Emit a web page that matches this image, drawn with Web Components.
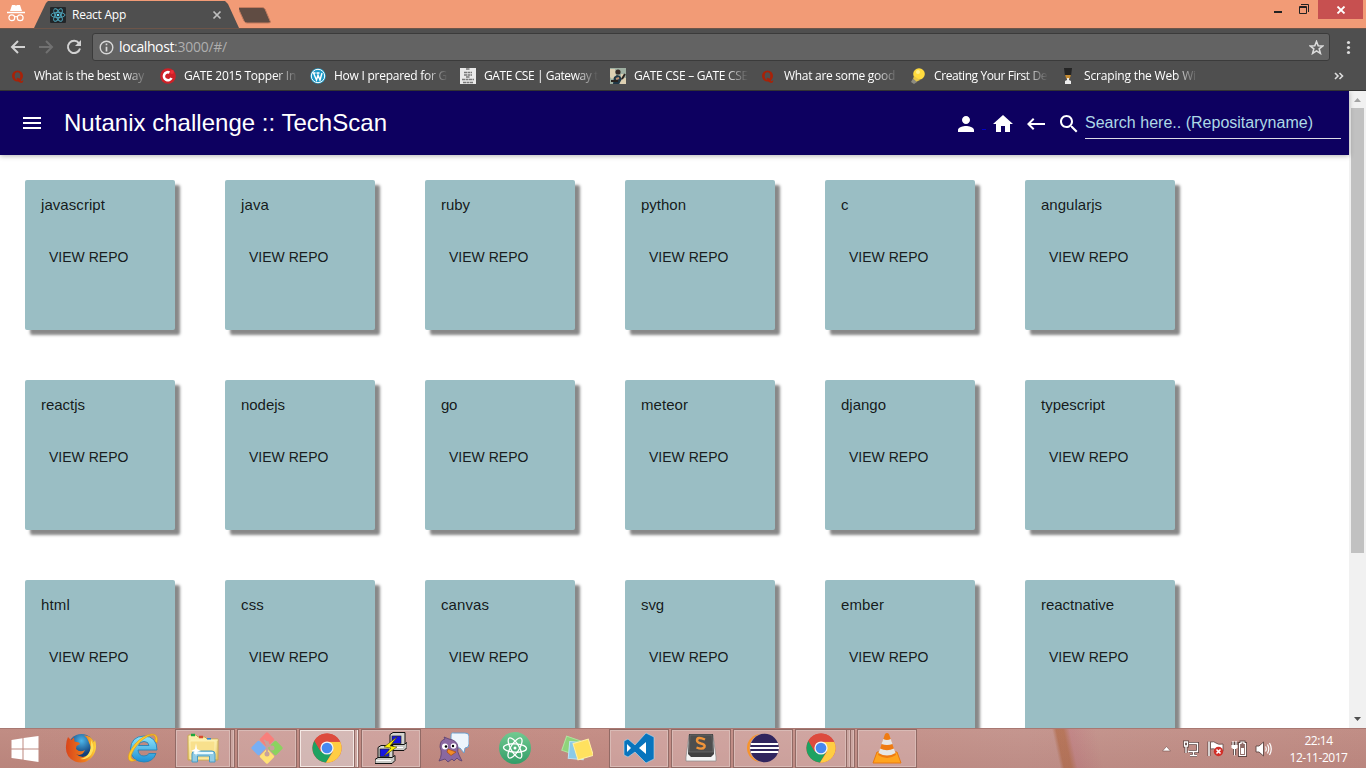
<!DOCTYPE html>
<html lang="en"><head><meta charset="utf-8"><title>React App</title>
<style>
html,body{margin:0;height:100%;overflow:hidden}
body{font-family:"Open Sans","Noto Sans",sans-serif}
</style></head><body>
<desktop-screen></desktop-screen>
<script>
const define=(name,css,html,after)=>customElements.define(name,class extends HTMLElement{
  connectedCallback(){
    if(this.shadowRoot)return;
    const r=this.attachShadow({mode:'open'});
    r.innerHTML='<style>*{box-sizing:border-box}svg{display:block;flex:none}'+css+'</style>'+(typeof html==='function'?html(this):html);
    if(after)after(this,r);
  }
});
const svg=(w,h,body,vb)=>`<svg width="${w}" height="${h}" viewBox="${vb||`0 0 ${w} ${h}`}">${body}</svg>`;

/* Single line of text tracked out or in to a given width */
define('fit-text',':host{display:block;white-space:pre}span{display:inline-block}','<span><slot></slot></span>',(el,r)=>{
  const w=+el.getAttribute('w'),s=r.querySelector('span'),n=el.textContent.length;
  s.style.letterSpacing=((w-s.getBoundingClientRect().width)/n)+'px';
});

const chrome=`<circle cx="16" cy="16" r="14.6" fill="#dd4b3e"/>
<path d="M3.4 8.7A14.6 14.6 0 0 0 15 30.6L21.5 19.5 16 16 9.8 19.6Z" fill="#1da261"/>
<path d="M15 30.6A14.6 14.6 0 0 0 29.2 9.7H16L22 19.5Z" fill="#ffcd43"/>
<path d="M3.4 8.7A14.6 14.6 0 0 1 29.2 9.7H16L9.8 19.6Z" fill="#dd4b3e"/>
<circle cx="16" cy="16" r="6.6" fill="#f4f4f4"/><circle cx="16" cy="16" r="5.3" fill="#4688f1"/>`;
const pc=(x,y)=>`<g transform="translate(${x} ${y})"><path d="M3 1 6-1H18V10L15 13H3Z" fill="#d4d4d0" stroke="#111"/><rect x="5" y="2.5" width="9" height="7.5" fill="#1515e0" stroke="#222" stroke-width=".7"/><path d="M0 13 3 11H17L20 9V14L17 17H0Z" fill="#c9c9c5" stroke="#111"/><path d="M1 14H16" stroke="#fff"/></g>`;
const apps={
firefox:`<defs><radialGradient id="b" cx=".5" cy=".25"><stop offset="0" stop-color="#4cb6ea"/><stop offset="1" stop-color="#123f79"/></radialGradient><linearGradient id="o" x2="1"><stop stop-color="#d9451b"/><stop offset=".65" stop-color="#ee7d1d"/><stop offset="1" stop-color="#ffd83a"/></linearGradient></defs>
<circle cx="16.5" cy="15.5" r="13.5" fill="url(#b)"/>
<path d="M3 5 6 8 9 5.5 9.5 9.5 14 10.5 15 12 11.5 14 11 17Q15 21 20 18 17 25 11 22 18 28 24 22 27 18 25 13L23 8Q22 5 19 3.5 26 3 29 10L30 8Q33 18 27 25 20 33 10 29.5 0 25 1 14 1 9 3 5Z" fill="url(#o)"/>
<path d="M26 8Q31 16 26 23 22 28 15 27 27 25 26 8Z" fill="#ffe15a"/>`,
ie:`<defs><linearGradient id="e" y2="1" x2="0"><stop stop-color="#8fe6fb"/><stop offset="1" stop-color="#1d8fd4"/></linearGradient></defs>
<path d="M30 18H11Q11.5 24 17 24 20.500 24 22 21.500H29Q26 30 17 30 4 29.500 3.500 17 4 4.500 17 4 30 4.500 30 18ZM11.500 13.500H22Q21.500 9.500 17 9.500 12.500 9.500 11.500 13.500Z" fill="url(#e)" fill-rule="evenodd" stroke="#2584b8" stroke-width=".9"/>
<path d="M30 11Q32 2 25 2 16 3 8 12 0 22 1.500 27 3 31 9 28 4 28 4 24 6 17 13 10 21 3 26 3 29.500 4 28 9Z" fill="#ffc928" stroke="#df9b13" stroke-width=".6"/>`,
folder:`<defs><linearGradient id="f" y2="1" x2="0"><stop stop-color="#fff4b4"/><stop offset="1" stop-color="#e5c566"/></linearGradient></defs>
<path d="M1 6V4Q1 3 2 3H9L11 5H18L20 7H31V28H1Z" fill="url(#f)" stroke="#c9a94e"/>
<path d="M4 3H8" stroke="#19a83d" stroke-width="2.500"/><path d="M12 5H16" stroke="#d94a2f" stroke-width="2.500"/><path d="M20 7H24" stroke="#2d86d5" stroke-width="2"/>
<path d="M4 8H31M3 9H28V27H3Z" fill="#f8e08c" stroke="#fff5bd" stroke-width=".8"/>
<path d="M5 30V22Q5 19 8 19H25Q28 19 28 22V30H22.500V24H10.500V30Z" fill="#91cce5" stroke="#4a9cc2"/><path d="M7 21H26" stroke="#e7faff" stroke-width="2"/><path d="M9 11 10 17 14 19 10 20 9 24 8 20 4 19 8 17Z" fill="#fff"/>`,
git:`<g transform="rotate(45 16 16)"><rect x="4.500" y="4.500" width="11" height="11" rx="1.500" fill="#f87f7b"/><rect x="16.500" y="4.500" width="11" height="11" rx="1.500" fill="#8bd35f"/><rect x="4.500" y="16.500" width="11" height="11" rx="1.500" fill="#77aff4"/><rect x="16.500" y="16.500" width="11" height="11" rx="1.500" fill="#ffe276"/></g><path d="M13 8 20.500 15.500M16 10V22" stroke="#c7a29c" stroke-width="1.800"/><circle cx="16" cy="11" r="2" fill="#c7a29c"/><circle cx="21" cy="16" r="2.500" fill="#c7a29c"/><circle cx="16" cy="22" r="2.500" fill="#c7a29c"/>`,
chrome,
putty:pc(12,1.5)+pc(0,14.5)+`<path d="M22 5 9 15 16 16 9 24 22 15 15 14Z" fill="#fff200" stroke="#4c4600" stroke-width=".6"/>`,
pidgin:`<path d="M17 1Q14 0 14 4V13Q14 16 18 16H23L27 21 28 16Q32 16 32 12V4Q32 1 28 1Z" fill="#edf5fc" stroke="#6b9fcd"/><path d="M2 29Q6 22 3 15 3 8 8 7L7 5 12 7Q20 8 21 15 20 20 22 23L25 29Q21 28 20 26L17 29 15 27 11 30 8 27Z" fill="#8a68a0" stroke="#59406f" stroke-width=".8"/><circle cx="8" cy="14.500" r="3" fill="#fff"/><circle cx="16.500" cy="14" r="2.800" fill="#fff"/><circle cx="9" cy="14.500" r="1.300"/><circle cx="16" cy="14" r="1.200"/><path d="M11 17 19 20 14 23.500 10 20Z" fill="#f28c26" stroke="#a84b13" stroke-width=".7"/>`,
atom:`<defs><linearGradient id="a" x2="0" y2="1"><stop stop-color="#72ca91"/><stop offset="1" stop-color="#329d68"/></linearGradient></defs><circle cx="16" cy="16" r="16" fill="url(#a)"/><g fill="none" stroke="#fff" stroke-width="1.300"><ellipse cx="16" cy="16" rx="4.200" ry="11.500" transform="rotate(-30 16 16)"/><ellipse cx="16" cy="16" rx="4.200" ry="11.500" transform="rotate(32 16 16)"/><ellipse cx="16" cy="16" rx="4.200" ry="11.500" transform="rotate(93 16 16)"/></g><circle cx="16" cy="16" r="1.500" fill="#fff"/>`,
notes:`<rect x="3" y="6" width="15" height="15" transform="rotate(19 10 13)" fill="#8ed47b" stroke="#b2e3a0"/><rect x="8" y="10" width="15" height="17" transform="rotate(5 15 18)" fill="#8acae8" stroke="#bde5f5"/><rect x="14" y="9" width="16" height="17" transform="rotate(-17 22 17)" fill="#ffe15f" stroke="#fff0a5"/>`,
code:`<path d="M1 9 5 7 12 13 23 1 31 5V27L23 31 12 20 5 25 1 23Z" fill="#0874bd" stroke="#bcdced" stroke-width=".6"/><path d="M4 12V20L8 16ZM23 10 16 16 23 22Z" fill="#fff"/>`,
sublime:`<path d="M4 3H28L31 25V29H1V25Z" fill="#f5f5f5" stroke="#888" stroke-width=".7"/><path d="M4 2H28L29 22 26 25H6L3 22Z" fill="#414141"/><path d="M5 3H27L28 20H4Z" fill="#4e4e4e" stroke="#7e7e7e" stroke-width=".5"/><path d="M20 7.500Q12 4 12 8.500 12 10.500 16 11.500 20.500 12.500 19.500 15 17.500 18 11.500 15.500" fill="none" stroke="#f0943a" stroke-width="2.400"/>`,
eclipse:`<circle cx="14" cy="16" r="14" fill="#f8942a"/><circle cx="17" cy="16" r="14.600" fill="#c7a09e"/><circle cx="17.500" cy="16" r="14.300" fill="#30255e"/><path d="M3.800 12H31.200M3 16H32M3.800 20H31.200" stroke="#fff" stroke-width="1.800"/>`,
vlc:`<path d="M6 20H26L30 31H2Z" fill="#ffa41f" stroke="#e97910"/><path d="M14 2Q16 0 18 2L25 23Q16 29 7 23Z" fill="#ef7b12"/><path d="M12.200 7 10.500 12Q16 14 21.500 12L19.800 7Q16 9 12.200 7ZM9 16.500 7.500 21Q16 26 24.500 21L23 16.500Q16 20 9 16.500Z" fill="#e6e6e6"/>`
};
define('app-icon',':host{display:block}',el=>svg(32,32,apps[el.getAttribute('name')]));

define('window-strip',`
:host{display:flex;height:28px;background:#f29b76;align-items:flex-start;color:#fff}
.in{padding:5px 0 0 7px;width:34px}
.tab{width:205px;height:28px;display:flex;align-items:center;padding:2px 0 0 16px;background:#4f4f4f;clip-path:polygon(0 100%,12px 3px,14px 1px,191px 1px,194px 4px,205px 100%)}
.title{margin-left:6px;width:140px;font-size:12px;line-height:26px}
.new{width:35px;padding-top:7px}
.win{margin-left:auto;display:flex}
.c{width:45px;height:19px;background:#c75050;margin-right:3px;display:flex;align-items:center;justify-content:center}`,
`<div class="in">${svg(18,17,'<path d="M5 0H8L9 .7 10 0H13L15 6H3Z" fill="#fff"/><path d="M0 7.500H18" stroke="#fff" stroke-width="1.500"/><g fill="none" stroke="#fff" stroke-width="1.200"><circle cx="4.800" cy="12.700" r="2.900"/><circle cx="13.200" cy="12.700" r="2.900"/><path d="M7.500 12Q9 11 10.500 12"/></g>')}</div>
<div class="tab">${svg(16,16,'<rect width="16" height="16" rx="1" fill="#222629"/><g fill="none" stroke="#50aac1" stroke-width=".9"><ellipse cx="8" cy="8" rx="7" ry="2.600"/><ellipse cx="8" cy="8" rx="7" ry="2.600" transform="rotate(60 8 8)"/><ellipse cx="8" cy="8" rx="7" ry="2.600" transform="rotate(120 8 8)"/></g><circle cx="8" cy="8" r="1.300" fill="#61dafb"/>')}
<div class="title"><fit-text w="54">React App</fit-text></div>${svg(10,10,'<path d="M1.500 1.500 8.500 8.500M8.500 1.500 1.500 8.500" stroke="#bfbfbf" stroke-width="1.700"/>')}</div>
<div class="new">${svg(35,17,'<path d="M0 .5H23Q25 .500 26 2L31.500 15Q31.500 16 29 16H8Q6 16 5 14L-.5 2Q-1 .500 0 .500Z" fill="#604c43" stroke="#c27b5e"/>')}</div>
<div class="win">${svg(44,19,'<rect x="0" y="11" width="8" height="2" fill="#222"/><path d="M25.500 6.500H32.500V13.500H25.500ZM25 7.500H33M27 4.500H34.500V12" fill="none" stroke="#222"/>')}<div class="c">${svg(10,8,'<path d="M1.500 .500 8.500 7.500M8.500 .500 1.500 7.500" stroke="#fff" stroke-width="1.800"/>')}</div></div>`);

define('address-row',`
:host{display:flex;height:34px;border-top:1px solid #6d5549;background:#4f4f4f;align-items:center;padding:3px 0 0 10px}
.nav{display:flex;gap:12px;width:82px}
.bar{width:1238px;height:28px;border:1px solid #3b3b3b;border-radius:3px;background:#636363;display:flex;align-items:center;padding:0 5px 0 6px;font-size:14px;color:#fff}
.bar fit-text{line-height:26px}.h{margin-left:5px}.p{color:#aeaeae;margin-right:auto}.m{margin-left:16px}`,
`<div class="nav">${svg(16,16,'<path d="M15 8H2M8 2 2 8 8 14" fill="none" stroke="#d2d2d2" stroke-width="2"/>')}${svg(16,16,'<path d="M1 8H14M8 2 14 8 8 14" fill="none" stroke="#717171" stroke-width="2"/>')}${svg(16,16,'<path d="M13 4.300A6.100 6.100 0 1 0 14 9.500" fill="none" stroke="#d2d2d2" stroke-width="2"/><path d="M15 1V7H9Z" fill="#d2d2d2"/>')}</div>
<div class="bar">${svg(15,15,'<circle cx="7.500" cy="7.500" r="6.300" fill="none" stroke="#d8d8d8" stroke-width="1.400"/><path d="M7.500 6.700V11.500M7.500 3.500V5.200" stroke="#d8d8d8" stroke-width="1.700"/>')}<fit-text class="h" w="55">localhost</fit-text><fit-text class="p" w="53">:3000/#/</fit-text>${svg(15,15,'<path d="M7.500 1.500 9.200 5.700 13.700 6 10.200 8.900 11.400 13.400 7.500 10.900 3.600 13.400 4.800 8.900 1.300 6 5.800 5.700Z" fill="none" stroke="#dcdcdc" stroke-width="1.600"/>')}</div>
<div class="m">${svg(5,15,'<g fill="#dcdcdc"><circle cx="2.500" cy="2.500" r="1.600"/><circle cx="2.500" cy="7.500" r="1.600"/><circle cx="2.500" cy="12.500" r="1.600"/></g>')}</div>`);

const marks={
q:'<path d="M7.500 2.500A5.500 5.500 0 1 0 7.500 13.500 5.500 5.500 0 1 0 7.500 2.500M7.500 4.200Q10.300 4.200 10.300 8T7.500 11.800 4.700 8 7.500 4.200" fill="#a82208" fill-rule="evenodd"/><path d="M6.500 10Q9 9 11 13 12 13.500 12.500 12.500H13.500Q13 15 11 15 8 14 7 11Z" fill="#a82208"/>',
gate:'<circle cx="8" cy="8" r="7.800" fill="#ce2027"/><path d="M9.500 4.500A4 4 0 1 0 11.500 10" fill="none" stroke="#fff" stroke-width="2.600"/><circle cx="12" cy="4" r="1.900" fill="#ed3038"/>',
wp:'<circle cx="8" cy="8" r="7.800" fill="#1c9ac8"/><circle cx="8" cy="8" r="6.700" fill="none" stroke="#fff"/><path d="M3.500 5 6.500 12 8 7 10 12 12 5M2.500 5H5.500M6.500 5H9.500" fill="none" stroke="#fff" stroke-width="1.400"/>',
note:'<rect width="16" height="16" fill="#e9e9e9"/><path d="M6 1H10M4 4.500H12M4 7H12M6 9H10M2 11.500H14M3 14.500H13" stroke="#777" stroke-width="1.300" stroke-dasharray="3 .5"/>',
photo:'<rect width="16" height="16" fill="#9eafa1"/><path d="M0 1H5L6 8 2 11 0 9ZM11 6H14V10H16V16H10Z" fill="#ddd0b2"/><circle cx="8" cy="4" r="2.600" fill="#352b27"/><path d="M4 9 7 7 10 8 12 11 9 16H3Z" fill="#203746"/><path d="M12 11 15 6M1 13H8" stroke="#28221f" stroke-width="2"/><path d="M6 11 9 10" stroke="#bd8d6c" stroke-width="2"/>',
bulb:'<circle cx="9" cy="6" r="5.800" fill="#ffdb3e"/><path d="M4 8 10 12 6 14 3 11Z" fill="#e6c746"/><path d="M3 10.500 7 14 4 16 1 14Z" fill="#8e8c80"/><circle cx="8" cy="4" r="2" fill="#fff08c"/>',
glass:'<path d="M4 0H12L11 8H5Z" fill="#242424"/><path d="M5 7H11L9.500 11H6.500Z" fill="#c48b33"/><path d="M7 10H9V12L11 13V16H5V13L7 12Z" fill="#eee"/>'};
define('book-mark',`:host{display:flex;width:150px;align-items:center;gap:8px;font-size:12px;line-height:18px;color:#fff}
.t{width:116px;overflow:hidden;-webkit-mask:linear-gradient(90deg,#000 91px,transparent 114px)}`,
el=>svg(16,16,marks[el.getAttribute('icon')])+`<div class="t"><fit-text w="${el.getAttribute('w')}">${el.textContent}</fit-text></div>`);
define('bookmark-row',`:host{display:flex;height:29px;background:#4f4f4f;border-bottom:1px solid #333;padding:0 0 1px 10px;align-items:center}.more{margin-left:124px}`,
[['q',110,'What is the best way'],['gate',112,'GATE 2015 Topper In'],['wp',113,'How I prepared for G'],['note',114,'GATE CSE | Gateway t'],['photo',114,'GATE CSE – GATE CSE'],['q',111,'What are some good'],['bulb',113,'Creating Your First De'],['glass',112,'Scraping the Web Wi']].map(([i,w,t])=>`<book-mark icon="${i}" w="${w}">${t}</book-mark>`).join('')+`<div class="more">${svg(10,8,'<path d="M1 1 4 4 1 7M5.500 1 8.500 4 5.500 7" fill="none" stroke="#ddd" stroke-width="1.600"/>')}</div>`);

const mi=d=>svg(24,24,`<path d="${d}" fill="#fff"/>`);
define('app-bar',`
:host{display:flex;position:relative;z-index:1;height:64px;background:#0d0060;box-shadow:0 1px 5px rgba(0,0,0,.3);align-items:center;padding:0 8px 0 20px;color:#fff;font-family:"Liberation Sans",sans-serif}
.title{margin-left:20px;font-size:24px;line-height:32px}
.acts{margin-left:auto;display:flex;align-items:center;padding-top:2px}
i{width:4px;height:1px;background:#0000c8;margin:11px 5px 0 4px}
.b{margin-left:9px}.s{margin-left:9px}
.input{width:256px;height:33px;border-bottom:1px solid #dcdce6;margin-left:4px;margin-top:-3px;font-size:16px;line-height:34px;color:#add8e6}`,
`${mi('M3 18h18v-2H3v2zm0-5h18v-2H3v2zm0-7v2h18V6H3z')}<div class="title"><fit-text w="323">Nutanix challenge :: TechScan</fit-text></div>
<div class="acts">${mi('M12 12c2.200 0 4-1.800 4-4s-1.800-4-4-4-4 1.800-4 4 1.800 4 4 4zm0 2c-2.700 0-8 1.300-8 4v2h16v-2c0-2.700-5.300-4-8-4z')}<i></i>${mi('M10 20v-6h4v6h5v-8h3L12 3 2 12h3v8z')}<div class="b">${mi('M21 11H6.830l3.580-3.590L9 6l-6 6 6 6 1.410-1.410L6.830 13H21z')}</div><div class="s">${mi('M15.500 14h-.79l-.28-.27C15.410 12.590 16 11.110 16 9.500 16 5.910 13.090 3 9.500 3S3 5.910 3 9.500 5.910 16 9.500 16c1.610 0 3.090-.59 4.230-1.570l.27.28v.79l5 4.990L20.490 19l-4.990-5zm-6 0C7.010 14 5 11.990 5 9.500S7.010 5 9.500 5 14 7.010 14 9.500 11.990 14 9.500 14z')}</div>
<div class="input"><fit-text w="228">Search here.. (Repositaryname)</fit-text></div></div>`);

define('repo-card',`
:host{display:block;width:150px;height:150px;background:#9abec4;border-radius:2px;box-shadow:5px 5px 3px #888;padding:16px;font-family:"Liberation Sans",sans-serif;color:rgba(0,0,0,.87)}
.n{font-size:15px;line-height:18px}.v{font-size:14px;line-height:36px;margin:25px 0 0 8px;white-space:nowrap}`,
'<div class="n"><slot></slot></div><div class="v"><fit-text w="79.500">VIEW REPO</fit-text></div>');
const names={javascript:64,java:28,ruby:29,python:45,c:7,angularjs:61,reactjs:44,nodejs:44,go:16,meteor:47,django:45,typescript:64,html:29,css:23,canvas:48,svg:23,ember:43,reactnative:73};
define('repo-grid',':host{display:grid;grid-template-columns:repeat(6,150px);gap:50px;padding:25px;align-content:start}',
Object.entries(names).map(([n,w])=>`<repo-card><fit-text w="${w}">${n}</fit-text></repo-card>`).join(''));
define('scroll-bar',`:host{display:flex;flex-direction:column;width:17px;background:#f1f1f1;align-items:center;justify-content:space-between}.t{width:13px;height:445px;background:#c1c1c1;margin-bottom:auto}`,
`${svg(17,17,'<path d="M5 11H12L8.500 7Z" fill="#a3a3a3"/>')}<div class="t"></div>${svg(17,17,'<path d="M5 6H12L8.500 10Z" fill="#505050"/>')}`);
define('page-view',':host{display:flex;height:637px;background:#fff;overflow:hidden}.m{flex:1;min-width:0}','<div class="m"><app-bar></app-bar><repo-grid></repo-grid></div><scroll-bar></scroll-bar>');

define('task-slot',`
:host{display:flex;width:62px;height:40px;padding:0 1px 1px;justify-content:center;align-items:center;flex:none}
.b{flex:1;height:39px;display:flex;justify-content:center;align-items:center;border:1px solid #916a65}
.open .b{background:rgba(225,195,195,.4);box-shadow:inset 0 0 0 1px #d9bab5}
.on .b{background:rgba(225,215,215,.6);box-shadow:inset 0 0 0 1px #f4e8e4}
.w{display:flex;width:60px}.idle .b{border-color:transparent}
.e{width:4px;height:39px;border:1px solid #916a65;border-left:0;background:#cba6a1;box-shadow:inset -1px 0 #d9bab5}.on .e{box-shadow:inset -1px 0 #f4e8e4}`,
el=>`<div class="w ${el.getAttribute('state')||'idle'}"><div class="b"><app-icon name="${el.getAttribute('app')}"></app-icon></div>${'<div class="e"></div>'.repeat(+el.getAttribute('stack')||0)}</div>`);
define('task-bar',`
:host{display:flex;height:40px;background:linear-gradient(transparent,rgba(130,70,65,.12)),linear-gradient(78deg,transparent 0 1037px,rgba(172,94,50,.55) 1041px 1048px,rgba(190,110,125,.35) 1054px,transparent 1080px),linear-gradient(90deg,#c18d84,#c58f87 45%,#c5968f 75%,#c18e86);border-top:1px solid #a87872;align-items:center;color:#fff}
.st{width:50px;padding-left:11px}.tray{margin-left:auto;display:flex;align-items:center}
.g{margin-left:12px}.h{margin-left:6px}.k{margin-left:8px}
.clock{font-size:12px;line-height:17px;width:94px;display:flex;flex-direction:column;align-items:center;padding:1px 1px 0 0}`,
`<div class="st">${svg(28,28,'<path d="M.5 5 11.500 3.300V13.500H.5ZM12.500 3.100 27.500 1V13.500H12.500ZM.5 14.500H11.500V24.600L.5 23ZM12.500 14.500H27.500V27L12.500 24.800Z" fill="#fff"/>')}</div>`+
[['firefox'],['ie'],['folder','open',1],['git','open'],['chrome','on',1],['putty','open'],['pidgin'],['atom'],['notes'],['code','open'],['sublime','open'],['eclipse','open'],['chrome','open',2],['vlc','open']].map(([a,s,k])=>`<task-slot app="${a}" state="${s||'idle'}" stack="${k||0}"></task-slot>`).join('')+
`<div class="tray">${svg(9,6,'<path d="M.500 5 4.500 .500 8.500 5Z" fill="#fff" stroke="#75504c" stroke-width=".6"/>')}
<div class="g">${svg(18,18,'<g fill="none" stroke="#5e4542" stroke-width="3"><path d="M6 3.500H14.500V11.500H6M10.500 11.500V15M7 15.500H14M3 6V13M1.500 2H4.500V6H1.500Z"/></g><g fill="none" stroke="#fff" stroke-width="1.300"><path d="M6 3.500H14.500V11.500H5M10.500 11.500V15M7 15.500H14M3 6V13M1.500 2H4.500V6H1.500Z"/></g>')}</div>
<div class="h">${svg(18,18,'<path d="M2 1.500V16" stroke="#5e4542" stroke-width="3"/><path d="M2 1.500V16" stroke="#fff" stroke-width="1.500"/><path d="M3.500 2Q7 1 9 3T16 4V11Q11 12 9 10T3.500 9Z" fill="#fff" stroke="#5e4542" stroke-width=".8"/><circle cx="11.500" cy="11.500" r="4.700" fill="#d22e28"/><path d="M9.500 9.500 13.500 13.500M13.500 9.500 9.500 13.500" stroke="#fff" stroke-width="1.600"/>')}</div>
<div class="h">${svg(16,18,'<g fill="none" stroke="#5e4542" stroke-width="3"><path d="M2 2V5M5 2V5M1 6H6M3.500 8V15"/><path d="M8.500 3.500H10V2H13V3.500H14.500V15.500H8.500Z"/></g><path d="M2 1V5M5 1V5M3.500 8V15.500" stroke="#fff" stroke-width="1.200"/><path d="M.5 5H6.500V7.500L5 9H2L.5 7.500Z" fill="#fff"/><path d="M8.500 3.500H10V2H13V3.500H14.500V15.500H8.500Z" fill="#8e6b67" stroke="#fff" stroke-width="1.200"/><path d="M10 8H13V14H10Z" fill="#fff"/>')}</div>
<div class="k">${svg(17,18,'<path d="M1 6H4L8.500 2V16L4 12H1Z" fill="#fff" stroke="#5e4542" stroke-width=".9"/><path d="M10.500 6.500Q12 9 10.500 11.500M12.500 4.500Q15 9 12.500 13.500M14.500 3Q18 9 14.500 15" fill="none" stroke="#fff" stroke-width="1.200"/>')}</div>
<div class="clock"><fit-text w="28">22:14</fit-text><fit-text w="58">12-11-2017</fit-text></div></div>`);

define('desktop-screen',':host{display:flex;flex-direction:column;width:1366px;height:768px;overflow:hidden}','<window-strip></window-strip><address-row></address-row><bookmark-row></bookmark-row><page-view></page-view><task-bar></task-bar>');
</script></body></html>
